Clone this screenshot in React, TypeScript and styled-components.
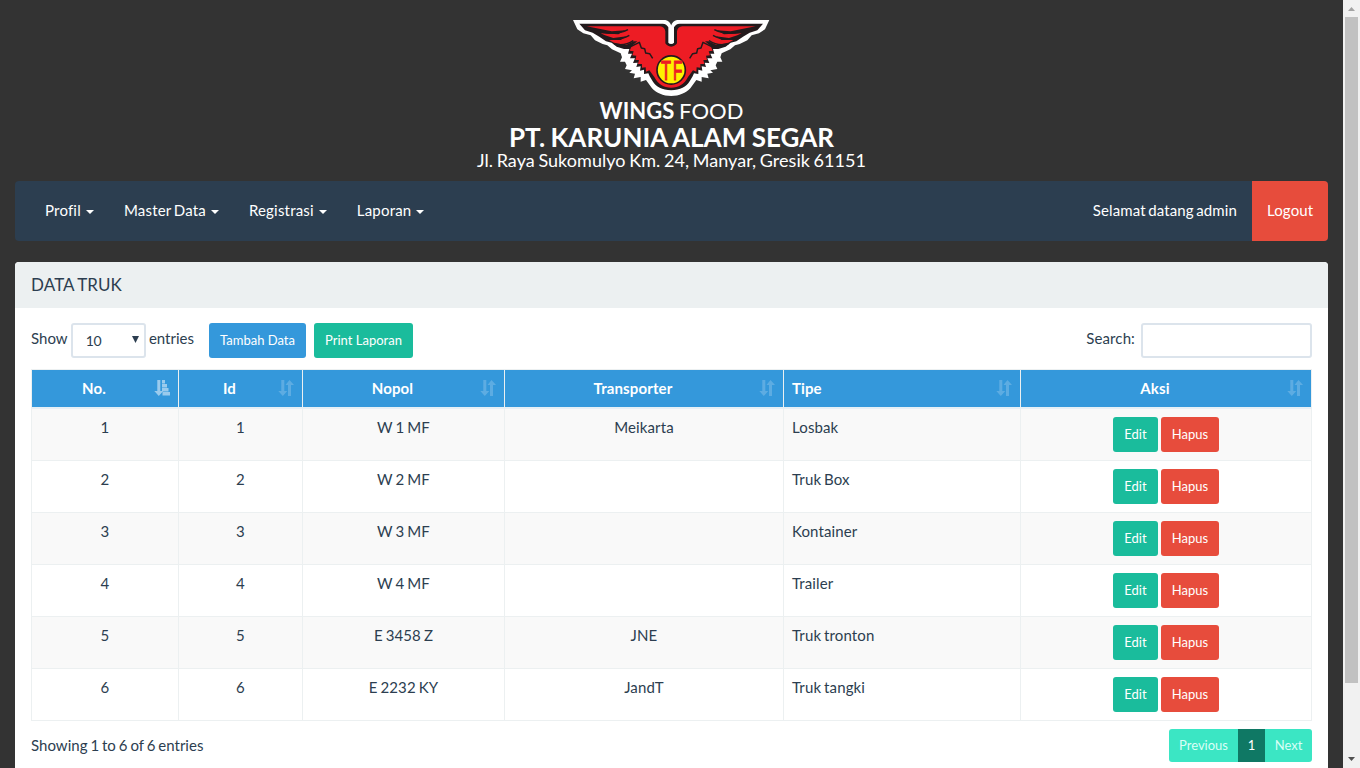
import React from "react";
import styled, { createGlobalStyle } from "styled-components";

const GlobalStyle = createGlobalStyle`
  * { box-sizing: border-box; }
  html, body { margin: 0; padding: 0; overflow: hidden; }
  body {
    font-family: Lato, "Liberation Sans", sans-serif;
    font-size: 15px;
    line-height: 21px;
    letter-spacing: 0.12px;
    word-spacing: -1px;
    color: #2c3e50;
    background: #333333;
  }
`;

const Screen = styled.div`
  display: flex;
  height: 768px;
  overflow: hidden;
`;

const Page = styled.div`
  flex: 1;
  display: flex;
  flex-direction: column;
  padding: 19px 15px 0;
`;

const Masthead = styled.header`
  display: flex;
  flex-direction: column;
  align-items: center;
  flex: none;
  height: 162px;
  color: #fff;
  letter-spacing: 0.04px;
  word-spacing: -1px;
`;

const LogoSvg = styled.svg`
  display: block;
  width: 198px;
  height: 78px;
  flex: none;
  margin-right: 1px;
`;

const Line = styled.div<{ $size: number; $height: number; $bold?: boolean }>`
  font-size: ${(p) => p.$size}px;
  line-height: ${(p) => p.$height}px;
  height: ${(p) => p.$height}px;
  font-weight: ${(p) => (p.$bold ? 700 : 400)};
  white-space: nowrap;
`;

const Navbar = styled.nav`
  display: flex;
  align-items: center;
  height: 60px;
  flex: none;
  padding-left: 15px;
  background: #2c3e50;
  border-radius: 4px;
  overflow: hidden;
  color: #fff;
`;

const NavItem = styled.a`
  display: flex;
  align-items: center;
  padding: 0 15px 1px;
  height: 60px;
  white-space: nowrap;
`;

const Caret = styled.span`
  margin: 3px 0 0 5px;
  border-top: 4px solid #fff;
  border-left: 4px solid transparent;
  border-right: 4px solid transparent;
`;

const MenuItem = styled(NavItem)`
  letter-spacing: 0.19px;
  word-spacing: -1.4px;
`;

const Welcome = styled.span`
  margin-left: auto;
  padding: 0 15px 1px 0;
  word-spacing: -1.4px;
`;

const Logout = styled(NavItem)`
  width: 76px;
  background: #e74c3c;
`;

const Panel = styled.section`
  margin-top: 21px;
  flex: none;
  height: 540px;
  background: #fff;
  border-radius: 4px 4px 0 0;
`;

const PanelHeading = styled.h3`
  margin: 0;
  height: 46px;
  padding: 0 16px;
  border-radius: 4px 4px 0 0;
  background: #ecf0f1;
  font-size: 17px;
  font-weight: 400;
  line-height: 46px;
`;

const PanelBody = styled.div`
  padding: 15px 16px 0;
`;

const Toolbar = styled.div`
  display: flex;
  height: 46px;
  align-items: flex-start;
`;

const Label = styled.span`
  line-height: 31px;
`;

const LengthControl = styled.div`
  display: flex;
  justify-content: space-between;
  width: 163px;
  letter-spacing: 0;
  white-space: nowrap;
`;

const LengthSelect = styled.div`
  display: flex;
  align-items: center;
  justify-content: space-between;
  width: 75px;
  height: 35px;
  padding: 0 5px 0 13px;
  border: 2px solid #dce4ec;
  border-radius: 3px;
  font-size: 14px;
  letter-spacing: -0.4px;
  line-height: 20px;
  svg { margin-top: -2px; }
`;

const Button = styled.button<{ $tone: string; $width: number }>`
  width: ${(p) => p.$width}px;
  height: 35px;
  padding: 0 0 1px;
  border: 0;
  border-radius: 3px;
  background: ${(p) => p.$tone};
  color: #fff;
  font: 400 13px/20px Lato, "Liberation Sans", sans-serif;
  white-space: nowrap;
`;

const ToolbarButtons = styled.div`
  display: flex;
  gap: 8px;
  margin-left: 15px;
`;

const SearchInput = styled.input`
  width: 171px;
  height: 35px;
  margin-left: 6px;
  border: 2px solid #dce4ec;
  border-radius: 3px;
  background: #fff;
`;

const SearchBox = styled.label`
  display: flex;
  margin-left: auto;
`;

const Table = styled.table`
  width: 1281px;
  table-layout: fixed;
  border-collapse: separate;
  border-spacing: 0;
  border: solid #ecf0f1;
  border-width: 1px 0 0 1px;
`;

const Th = styled.th<{ $align: string; $width: number }>`
  width: ${(p) => p.$width}px;
  height: 39px;
  padding: 0 7px 0 8px;
  background: #3498db;
  background-clip: padding-box;
  border-right: 1px solid #ecf0f1;
  border-bottom: 2px solid #e6f0f6;
  color: #fff;
  font-weight: 700;
  text-align: ${(p) => p.$align};
`;

const HeadCell = styled.div`
  display: flex;
  align-items: center;
  span { flex: 1; padding-right: 6px; }
  svg { flex: none; margin-top: -2px; }
`;

const Row = styled.tr`
  height: 52px;
  background: #fff;
  &:nth-child(odd) { background: #f9f9f9; }
`;

const Td = styled.td<{ $align: string }>`
  height: 52px;
  padding: 8px 8px 0;
  border-right: 1px solid #ecf0f1;
  border-bottom: 1px solid #ecf0f1;
  vertical-align: top;
  text-align: ${(p) => p.$align};
`;

const Actions = styled.div`
  display: flex;
  justify-content: center;
  gap: 3px;
`;

const Footer = styled.div`
  display: flex;
  justify-content: space-between;
  padding-top: 8px;
`;

const Info = styled.div`
  line-height: 33px;
  letter-spacing: 0.03px;
`;

const Pagination = styled.div`
  display: flex;
  height: 33px;
  border-radius: 3px;
  overflow: hidden;
  letter-spacing: 0;
`;

const PageLink = styled.a<{ $width: number; $active?: boolean }>`
  width: ${(p) => p.$width}px;
  line-height: 33px;
  font-size: 13px;
  text-align: center;
  background: ${(p) => (p.$active ? "#0f7864" : "#3be6c4")};
  color: ${(p) => (p.$active ? "#fff" : "#d9fff6")};
`;

const ScrollTrack = styled.div`
  display: flex;
  flex-direction: column;
  align-items: center;
  width: 17px;
  height: 768px;
  background: #f1f1f1;
`;

const ScrollThumb = styled.div`
  width: 13px;
  height: 666px;
  background: #c1c1c1;
`;

const ScrollArrow = styled.svg`
  display: block;
  width: 17px;
  height: 17px;
`;

const ScrollGap = styled.div`
  flex: 1;
`;

function WingHalf() {
  return (
    <>
      <path fill="#fff" d="M9 12H286Q300 16 304 29V240C278 240 260 231 246 217L228 192L212 197V183L191 187L195 173L178 170L186 163L165 159L170 148L165 137L150 137L156 124L152 112L126 100L112 88L98 84L75 73L62 58L40 52L22 40Z" />
      <path fill="#231a1c" d="M28 23H278Q290 24 295 34V80Q298 84 304 84V223C276 223 258 212 248 196L239 181L235 172L222 174V161L210 164L212 151L199 153L203 140L189 141L195 127L180 127L186 113L174 113L178 99L162 99L140 92L125 80L108 76L88 62L68 50L45 43Z" />
      <path fill="#ed1c24" d="M50 31H270Q284 33 286 46V82Q291 91 304 92V215C281 215 264 205 253 183L238 163L228 167L227 154L216 155L216 144L204 144L207 132L196 132L199 119L187 118L191 106L179 104L185 90L202 76L192 76L168 87L132 80L117 72L152 72L170 61L130 66L105 58L92 52L145 55L166 43L125 46Z" />
      <path fill="none" stroke="#231a1c" strokeWidth="4.5" strokeLinejoin="round" d="M98 49Q140 58 174 41M112 68Q150 74 178 58M132 84Q165 91 190 74M182 92L208 79L214 96L224 98L227 111L239 113L248 127" />
    </>
  );
}

function Logo() {
  return (
    <LogoSvg viewBox="6 9 594 234">
      <WingHalf />
      <g transform="translate(607 0) scale(-1 1)">
        <WingHalf />
      </g>
      <circle cx="303.5" cy="162" r="45" fill="#231a1c" />
      <circle cx="303.5" cy="162" r="40" fill="#fff200" />
      <g fill="#ed1c24" stroke="#ed1c24" strokeWidth="3.5" fontFamily="Liberation Sans, sans-serif" textAnchor="middle" letterSpacing="0">
        <text transform="translate(288 191) scale(.6 1)" fontSize="82">T</text>
        <text transform="translate(323 191) scale(.56 1)" fontSize="82">F</text>
      </g>
    </LogoSvg>
  );
}

function SortIcon({ sorted }: { sorted?: boolean }) {
  return (
    <svg width="17" height="16" viewBox="0 0 17 16" fill="#fff" opacity={sorted ? 0.5 : 0.2}>
      <path d="M3.3 0H6.3V11H9.3L4.8 16L.3 11H3.3Z" />
      {sorted ? (
        <path d="M8 0H11V3.5H8ZM8 4H13V7.5H8ZM8 8H14.5V11.5H8ZM8.5 12H16V15.5H8.5Z" />
      ) : (
        <path d="M10 16H13V5H16L11.5 0L7.5 5H10Z" />
      )}
    </svg>
  );
}

const columns = [
  { title: "No.", width: 147, align: "center" },
  { title: "Id", width: 124, align: "center" },
  { title: "Nopol", width: 202, align: "center" },
  { title: "Transporter", width: 279, align: "center" },
  { title: "Tipe", width: 237, align: "left" },
  { title: "Aksi", width: 291, align: "center" },
];

const trucks = [
  ["1", "1", "W 1 MF", "Meikarta", "Losbak"],
  ["2", "2", "W 2 MF", "", "Truk Box"],
  ["3", "3", "W 3 MF", "", "Kontainer"],
  ["4", "4", "W 4 MF", "", "Trailer"],
  ["5", "5", "E 3458 Z", "JNE", "Truk tronton"],
  ["6", "6", "E 2232 KY", "JandT", "Truk tangki"],
];

export default function App() {
  return (
    <Screen>
      <GlobalStyle />
      <Page>
        <Masthead>
          <Logo />
          <Line $size={22} $height={28}><b>WINGS</b> FOOD</Line>
          <Line $size={26} $height={25} $bold>PT. KARUNIA ALAM SEGAR</Line>
          <Line $size={18} $height={20}>Jl. Raya Sukomulyo Km. 24, Manyar, Gresik 61151</Line>
        </Masthead>
        <Navbar>
          {["Profil", "Master Data", "Registrasi", "Laporan"].map((item) => (
            <MenuItem key={item}>{item}<Caret /></MenuItem>
          ))}
          <Welcome>Selamat datang admin</Welcome>
          <Logout>Logout</Logout>
        </Navbar>
        <Panel>
          <PanelHeading>DATA TRUK</PanelHeading>
          <PanelBody>
            <Toolbar>
              <LengthControl>
                <Label>Show</Label>
                <LengthSelect>
                  10
                  <svg width="7" height="7" viewBox="0 0 7 7"><path d="M0 0H7L3.5 7Z" fill="#2c3e50" /></svg>
                </LengthSelect>
                <Label>entries</Label>
              </LengthControl>
              <ToolbarButtons>
                <Button $tone="#3498db" $width={97}>Tambah Data</Button>
                <Button $tone="#1abc9c" $width={99}>Print Laporan</Button>
              </ToolbarButtons>
              <SearchBox>
                <Label>Search:</Label>
                <SearchInput />
              </SearchBox>
            </Toolbar>
            <Table>
              <thead>
                <tr>
                  {columns.map((c, i) => (
                    <Th key={c.title} $align={c.align} $width={c.width}>
                      <HeadCell><span>{c.title}</span><SortIcon sorted={i === 0} /></HeadCell>
                    </Th>
                  ))}
                </tr>
              </thead>
              <tbody>
                {trucks.map((truck) => (
                  <Row key={truck[0]}>
                    {truck.map((value, i) => (
                      <Td key={i} $align={columns[i].align}>{value}</Td>
                    ))}
                    <Td $align="center">
                      <Actions>
                        <Button $tone="#1abc9c" $width={45}>Edit</Button>
                        <Button $tone="#e74c3c" $width={58}>Hapus</Button>
                      </Actions>
                    </Td>
                  </Row>
                ))}
              </tbody>
            </Table>
            <Footer>
              <Info>Showing 1 to 6 of 6 entries</Info>
              <Pagination>
                <PageLink $width={69}>Previous</PageLink>
                <PageLink $width={27} $active>1</PageLink>
                <PageLink $width={47}>Next</PageLink>
              </Pagination>
            </Footer>
          </PanelBody>
        </Panel>
      </Page>
      <ScrollTrack>
        <ScrollArrow viewBox="0 0 17 17"><path d="M5 11H12L8.5 7Z" fill="#a3a3a3" /></ScrollArrow>
        <ScrollThumb />
        <ScrollGap />
        <ScrollArrow viewBox="0 0 17 17"><path d="M5 6H12L8.5 10Z" fill="#505050" /></ScrollArrow>
      </ScrollTrack>
    </Screen>
  );
}
